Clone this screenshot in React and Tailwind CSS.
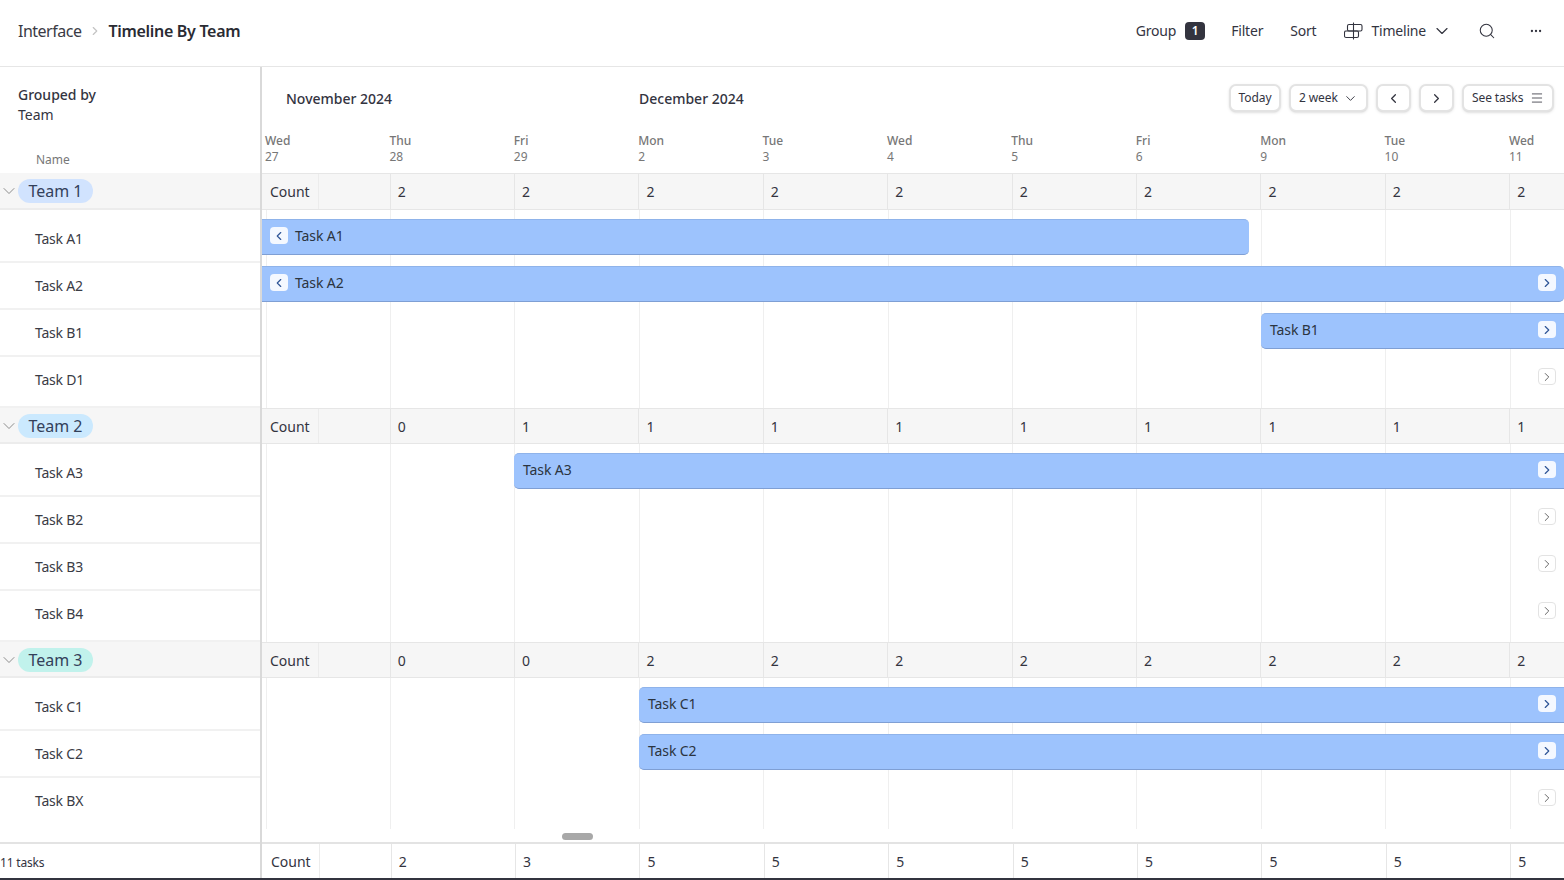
import React from "react";
import { ChevronDown, ChevronLeft, ChevronRight, Ellipsis, Menu, Search } from "lucide-react";

const days = [
    ["Wed", "27"],
    ["Thu", "28"],
    ["Fri", "29"],
    ["Mon", "2"],
    ["Tue", "3"],
    ["Wed", "4"],
    ["Thu", "5"],
    ["Fri", "6"],
    ["Mon", "9"],
    ["Tue", "10"],
    ["Wed", "11"],
];

const groups = [
    {
        name: "Team 1",
        pill: "bg-[#d1e3fe]",
        counts: [2, 2, 2, 2, 2, 2, 2, 2, 2, 2],
        tasks: [
            { name: "Task A1", left: 0, width: 987, from: true },
            { name: "Task A2", left: 0, width: 1302, from: true, to: true },
            { name: "Task B1", left: 999, width: 303, to: true },
            { name: "Task D1" },
        ],
    },
    {
        name: "Team 2",
        pill: "bg-[#cbe9fe]",
        counts: [0, 1, 1, 1, 1, 1, 1, 1, 1, 1],
        tasks: [
            { name: "Task A3", left: 252, width: 1050, to: true },
            { name: "Task B2" },
            { name: "Task B3" },
            { name: "Task B4" },
        ],
    },
    {
        name: "Team 3",
        pill: "bg-[#c1f2ec]",
        counts: [0, 0, 2, 2, 2, 2, 2, 2, 2, 2],
        tasks: [
            { name: "Task C1", left: 377, width: 925, to: true },
            { name: "Task C2", left: 377, width: 925, to: true },
            { name: "Task BX" },
        ],
    },
];

function TimelineIcon() {
    return (
        <svg width="19" height="18" viewBox="0 0 19 18" fill="none" stroke="#33343f" strokeWidth="1.1" className="ml-[28px]">
            <path d="M9.5 0.5v17" />
            <rect x="3.5" y="2.5" width="14.5" height="6.5" rx="1.5" />
            <rect x="0.5" y="9" width="14" height="6.5" rx="1.5" />
        </svg>
    );
}

function ToolButton({ children, className = "" }) {
    return (
        <button className={`h-[28px] flex items-center rounded-[7px] border-2 border-[#e3e3e3] bg-white shadow-sm text-[12px] tracking-[-0.1px] text-[#33343f] ${className}`}>
            {children}
        </button>
    );
}

function BarArrow({ left, plain }) {
    const Icon = left ? ChevronLeft : ChevronRight;
    return (
        <span className={`w-[18px] h-[17px] flex items-center justify-center rounded-[4px] ${plain ? "bg-white border border-[#e3e3e3] text-[#444]" : "bg-[#f4f8ff] text-[#2f5597]"}`}>
            <Icon size={14} strokeWidth={plain ? 1.4 : 2} />
        </span>
    );
}

function CountRow({ counts, className = "" }) {
    return (
        <div className={`flex text-[14px] text-[#33343f] ${className}`}>
            <div className="w-[57px] shrink-0 flex items-center pl-2 border-r border-[#ececec]">Count</div>
            <div className="w-[70.7px] shrink-0" />
            {counts.map((count, i) => (
                <div key={i} className="w-[124.4px] shrink-0 flex items-center pl-[7px] border-l border-[#e6e6e6]">
                    {count}
                </div>
            ))}
        </div>
    );
}

function TimelineRow({ task, index, total }) {
    const padding = index === 0 ? "pt-[5px]" : index === total - 1 ? "pb-[5.2px]" : "";
    return (
        <div className={padding}>
            <div className="h-[47px] pt-[4px]">
                {task.width ? (
                    <div
                        className={`h-[36px] flex items-center bg-[#9dc3fd] border-b border-[#7f9fd4] border-t border-t-[#8fb3ea] text-[14px] tracking-[-0.1px] text-[#2b3440] ${task.from ? "rounded-r-[5px]" : "rounded-l-[5px]"} ${task.from && task.to ? "rounded-none" : ""}`}
                        style={{ marginLeft: task.left, width: task.width }}
                    >
                        {task.from ? (
                            <span className="ml-2 mr-[7px] -mt-[3px]">
                                <BarArrow left />
                            </span>
                        ) : (
                            <span className="w-[9px]" />
                        )}
                        <span className="-mt-[3px]">{task.name}</span>
                        {task.to && (
                            <span className="ml-auto mr-2 -mt-[3px]">
                                <BarArrow />
                            </span>
                        )}
                    </div>
                ) : (
                    <div className="h-[36px] flex items-center justify-end pr-2 pb-[3px]">
                        <BarArrow plain />
                    </div>
                )}
            </div>
        </div>
    );
}

export default function App() {
    const font = { fontFamily: '"Noto Sans", "Open Sans", sans-serif' };

    return (
        <div className="w-full h-[880px] overflow-hidden flex flex-col bg-white text-[#33343f]" style={font}>
            <header className="h-[67px] shrink-0 flex items-center pl-[18px] pb-[5px] border-b border-[#e6e6e6] text-[14px] tracking-[-0.2px]">
                <span className="text-[16px] tracking-[-0.5px] text-[#3a3b45]">Interface</span>
                <ChevronRight size={14} className="ml-[7px] mr-[6px] text-[#c4c4c4]" />
                <span className="text-[16px] font-semibold tracking-[-0.3px] text-[#2a2b33]">Timeline By Team</span>
                <div className="ml-auto flex items-center">
                    <span>Group</span>
                    <span className="ml-[9px] w-[20px] h-[18px] flex items-center justify-center rounded-[4px] bg-[#33343f] text-white text-[12px] font-semibold">1</span>
                    <span className="ml-[26px]">Filter</span>
                    <span className="ml-[27px]">Sort</span>
                    <TimelineIcon />
                    <span className="ml-[8px]">Timeline</span>
                    <ChevronDown size={20} strokeWidth={1.4} className="ml-[6px]" />
                    <Search size={18} strokeWidth={1.4} className="ml-[26px]" />
                    <Ellipsis size={14} strokeWidth={2} className="ml-[33px] mr-[21px]" />
                </div>
            </header>

            <div className="flex-1 flex min-h-0">
                <aside className="w-[262px] shrink-0 flex flex-col border-r-2 border-[#d9d9d9]">
                    <div className="h-[106px] shrink-0 pl-[18px] pt-[18px] text-[14px] leading-[20px]">
                        <div className="font-medium text-[#33343f]">Grouped by</div>
                        <div>Team</div>
                        <div className="pl-[18px] pt-[27px] text-[12px] leading-[16px] text-[#777]">Name</div>
                    </div>
                    {groups.map((group, g) => (
                        <div key={group.name}>
                            <div className={`${g === 0 ? "h-[37px] pt-[1px]" : "h-[36px] pt-[2px]"} flex items-center bg-[#f6f6f6] border-b-2 border-[#ececec]`}>
                                <ChevronDown size={20} strokeWidth={1} className="-ml-px shrink-0 text-[#777]" />
                                <span className={`-ml-px w-[75px] h-[24px] flex items-center justify-center rounded-full text-[16px] text-[#33405a] ${group.pill}`}>
                                    {group.name}
                                </span>
                            </div>
                            {group.tasks.map((task, i) => {
                                const last = i === group.tasks.length - 1;
                                return (
                                    <div
                                        key={task.name}
                                        className={`${i === 0 ? "pt-[6px]" : ""} ${last ? "pb-[4.2px]" : ""} ${!last || g < groups.length - 1 ? "border-b-2 border-[#f1f1f1]" : ""}`}
                                    >
                                        <div className="h-[45px] flex items-center pl-[35px] text-[14px] text-[#3a3b45] tracking-[-0.2px]">{task.name}</div>
                                    </div>
                                );
                            })}
                        </div>
                    ))}
                    <div className="mt-auto h-[36px] shrink-0 flex items-center pt-[3px] border-t-2 border-[#e3e3e3] text-[12px] tracking-[-0.2px] text-[#33343f]">11 tasks</div>
                </aside>

                <main className="flex-1 min-w-0 flex flex-col overflow-hidden relative">
                    <div className="h-[106px] shrink-0 flex flex-col">
                        <div className="h-[62px] shrink-0 flex items-center">
                            <span className="ml-[24px] w-[353px] text-[14px] font-medium">November 2024</span>
                            <span className="text-[14px] font-medium">December 2024</span>
                            <div className="ml-auto flex items-center gap-2 mr-[10px]">
                                <ToolButton className="w-[52px] justify-center">Today</ToolButton>
                                <ToolButton className="w-[79px] justify-between pl-2 pr-[8px]">
                                    2 week
                                    <ChevronDown size={15} strokeWidth={1.5} />
                                </ToolButton>
                                <ToolButton className="w-[35px] justify-center"><ChevronLeft size={15} /></ToolButton>
                                <ToolButton className="w-[35px] justify-center"><ChevronRight size={15} /></ToolButton>
                                <ToolButton className="w-[92px] justify-between pl-2 pr-[8px]">
                                    See tasks
                                    <Menu size={14} strokeWidth={1.4} />
                                </ToolButton>
                            </div>
                        </div>
                        <div className="flex pl-[3px] pt-[4px] text-[12px] leading-[16px] text-[#777]">
                            {days.map(([day, date]) => (
                                <div key={day + date} className="w-[124.4px] shrink-0">
                                    <div className="font-medium">{day}</div>
                                    <div>{date}</div>
                                </div>
                            ))}
                        </div>
                    </div>

                    <div className="relative flex-1 min-h-0">
                        <div className="absolute left-[3.7px] top-0 bottom-[13px] flex">
                            {days.map(([day, date]) => (
                                <div key={day + date} className="w-[124.4px] shrink-0 border-l border-[#efefef]" />
                            ))}
                        </div>
                        <div className="relative">
                            {groups.map((group, g) => (
                                <div key={group.name}>
                                    <CountRow counts={group.counts} className={`${g === 0 ? "h-[37px]" : "h-[36px]"} bg-[#f6f6f6] border-y border-[#e6e6e6]`} />
                                    {group.tasks.map((task, i) => (
                                        <TimelineRow key={task.name} task={task} index={i} total={group.tasks.length} />
                                    ))}
                                </div>
                            ))}
                        </div>
                        <div className="absolute left-[300px] bottom-[2px] w-[31px] h-[7px] rounded-full bg-[#a8a8a8]" />
                    </div>

                    <CountRow counts={[2, 3, 5, 5, 5, 5, 5, 5, 5, 5]} className="h-[36px] shrink-0 bg-white border-t-2 border-[#e3e3e3] pl-px" />
                </main>
            </div>
            <div className="h-[2px] shrink-0 bg-[#33343f]" />
        </div>
    );
}
